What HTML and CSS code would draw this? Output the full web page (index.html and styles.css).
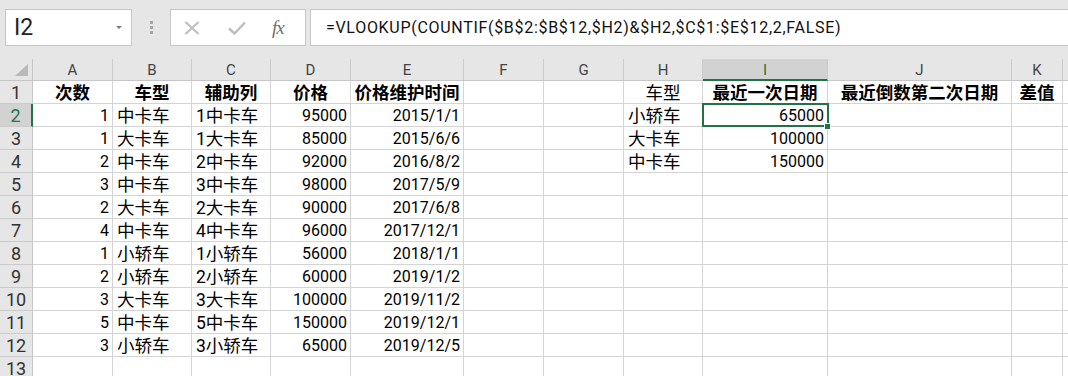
FILE: index.html
```html
<!DOCTYPE html>
<html lang="zh-CN">
<head>
<meta charset="utf-8">
<title>Sheet</title>
<link rel="stylesheet" href="styles.css">
</head>
<body>
<div class="bar">
  <div class="namebox"><span class="name">I2</span><span class="caret"></span></div>
  <div class="dots"><i></i><i></i><i></i></div>
  <div class="btns">
    <svg class="ico" width="16" height="14" viewBox="0 0 16 14"><path d="M1.5 1 L14.5 13 M14.5 1 L1.5 13" stroke="#bdbdbd" stroke-width="2" fill="none"/></svg>
    <svg class="ico" width="18" height="14" viewBox="0 0 18 14"><path d="M1 7.5 L6.5 12.5 L17 1.5" stroke="#bdbdbd" stroke-width="2.4" fill="none"/></svg>
    <span class="fx"><i>f</i><i>x</i></span>
  </div>
  <div class="formula">=VLOOKUP(COUNTIF($B$2:$B$12,$H2)&amp;$H2,$C$1:$E$12,2,FALSE)</div>
</div>

<div class="sheet">
  <div class="corner"><svg width="13" height="12" viewBox="0 0 13 12"><polygon points="13,0 13,12 0,12" fill="#b9b9b9"/></svg></div>
  <div class="ch">A</div><div class="ch">B</div><div class="ch">C</div><div class="ch">D</div><div class="ch">E</div><div class="ch">F</div><div class="ch">G</div><div class="ch">H</div><div class="ch act">I</div><div class="ch">J</div><div class="ch">K</div><div class="ch"></div>

  <div class="rh">1</div>
  <div class="c b">次数</div><div class="c b">车型</div><div class="c b">辅助列</div><div class="c b">价格</div><div class="c b">价格维护时间</div><div class="c"></div><div class="c"></div><div class="c ctr">车型</div><div class="c b">最近一次日期</div><div class="c b">最近倒数第二次日期</div><div class="c b">差值</div><div class="c"></div>

  <div class="rh act">2</div>
  <div class="c n">1</div><div class="c t">中卡车</div><div class="c t">1中卡车</div><div class="c n">95000</div><div class="c n">2015/1/1</div><div class="c"></div><div class="c"></div><div class="c t">小轿车</div><div class="c n sel">65000</div><div class="c"></div><div class="c"></div><div class="c"></div>

  <div class="rh">3</div>
  <div class="c n">1</div><div class="c t">大卡车</div><div class="c t">1大卡车</div><div class="c n">85000</div><div class="c n">2015/6/6</div><div class="c"></div><div class="c"></div><div class="c t">大卡车</div><div class="c n">100000</div><div class="c"></div><div class="c"></div><div class="c"></div>

  <div class="rh">4</div>
  <div class="c n">2</div><div class="c t">中卡车</div><div class="c t">2中卡车</div><div class="c n">92000</div><div class="c n">2016/8/2</div><div class="c"></div><div class="c"></div><div class="c t">中卡车</div><div class="c n">150000</div><div class="c"></div><div class="c"></div><div class="c"></div>

  <div class="rh">5</div>
  <div class="c n">3</div><div class="c t">中卡车</div><div class="c t">3中卡车</div><div class="c n">98000</div><div class="c n">2017/5/9</div><div class="c"></div><div class="c"></div><div class="c"></div><div class="c"></div><div class="c"></div><div class="c"></div><div class="c"></div>

  <div class="rh">6</div>
  <div class="c n">2</div><div class="c t">大卡车</div><div class="c t">2大卡车</div><div class="c n">90000</div><div class="c n">2017/6/8</div><div class="c"></div><div class="c"></div><div class="c"></div><div class="c"></div><div class="c"></div><div class="c"></div><div class="c"></div>

  <div class="rh">7</div>
  <div class="c n">4</div><div class="c t">中卡车</div><div class="c t">4中卡车</div><div class="c n">96000</div><div class="c n">2017/12/1</div><div class="c"></div><div class="c"></div><div class="c"></div><div class="c"></div><div class="c"></div><div class="c"></div><div class="c"></div>

  <div class="rh">8</div>
  <div class="c n">1</div><div class="c t">小轿车</div><div class="c t">1小轿车</div><div class="c n">56000</div><div class="c n">2018/1/1</div><div class="c"></div><div class="c"></div><div class="c"></div><div class="c"></div><div class="c"></div><div class="c"></div><div class="c"></div>

  <div class="rh">9</div>
  <div class="c n">2</div><div class="c t">小轿车</div><div class="c t">2小轿车</div><div class="c n">60000</div><div class="c n">2019/1/2</div><div class="c"></div><div class="c"></div><div class="c"></div><div class="c"></div><div class="c"></div><div class="c"></div><div class="c"></div>

  <div class="rh">10</div>
  <div class="c n">3</div><div class="c t">大卡车</div><div class="c t">3大卡车</div><div class="c n">100000</div><div class="c n">2019/11/2</div><div class="c"></div><div class="c"></div><div class="c"></div><div class="c"></div><div class="c"></div><div class="c"></div><div class="c"></div>

  <div class="rh">11</div>
  <div class="c n">5</div><div class="c t">中卡车</div><div class="c t">5中卡车</div><div class="c n">150000</div><div class="c n">2019/12/1</div><div class="c"></div><div class="c"></div><div class="c"></div><div class="c"></div><div class="c"></div><div class="c"></div><div class="c"></div>

  <div class="rh">12</div>
  <div class="c n">3</div><div class="c t">小轿车</div><div class="c t">3小轿车</div><div class="c n">65000</div><div class="c n">2019/12/5</div><div class="c"></div><div class="c"></div><div class="c"></div><div class="c"></div><div class="c"></div><div class="c"></div><div class="c"></div>

  <div class="rh">13</div>
  <div class="c"></div><div class="c"></div><div class="c"></div><div class="c"></div><div class="c"></div><div class="c"></div><div class="c"></div><div class="c"></div><div class="c"></div><div class="c"></div><div class="c"></div><div class="c"></div>
</div>
</body>
</html>
```

FILE: styles.css
```css
html, body {
  margin: 0;
  padding: 0;
}
body {
  width: 1068px;
  height: 376px;
  overflow: hidden;
  background: #ffffff;
  font-family: Roboto, "Noto Sans CJK SC", sans-serif;
  color: #000;
}

/* ---------- formula bar ---------- */
.bar {
  height: 59px;
  box-sizing: border-box;
  background: #e6e6e6;
  display: flex;
  align-items: flex-start;
  padding: 9px 0 0 5px;
}
.namebox {
  width: 127px;
  height: 37px;
  box-sizing: border-box;
  background: #fff;
  border: 1px solid #c6c6c6;
  display: flex;
  align-items: center;
  justify-content: space-between;
  padding: 0 9px 0 8px;
}
.name {
  font-size: 23px;
  color: #222;
  line-height: 1;
}
.caret {
  width: 0;
  height: 0;
  border-left: 3px solid transparent;
  border-right: 3px solid transparent;
  border-top: 3px solid #7a7a7a;
  margin-bottom: 1px;
}
.dots {
  width: 38px;
  height: 37px;
  display: flex;
  flex-direction: column;
  align-items: center;
  justify-content: center;
  gap: 2px;
}
.dots i {
  display: block;
  width: 3px;
  height: 3px;
  background: #a6a6a6;
}
.btns {
  width: 136px;
  height: 37px;
  box-sizing: border-box;
  background: #fff;
  border: 1px solid #c6c6c6;
  display: flex;
  align-items: center;
  padding-left: 13px;
  gap: 28px;
}
.ico {
  display: block;
}
.fx {
  font-family: "Liberation Serif", serif;
  font-size: 19px;
  color: #6e6e6e;
  line-height: 1;
  margin-left: -2px;
}
.fx i {
  font-style: italic;
}
.fx i + i {
  margin-left: -1px;
}
.formula {
  flex: 1;
  margin-left: 4px;
  height: 37px;
  box-sizing: border-box;
  background: #fff;
  border: 1px solid #c6c6c6;
  border-right: none;
  display: flex;
  align-items: center;
  padding-left: 15px;
  font-size: 16px;
  letter-spacing: 0.7px;
  color: #111;
  white-space: nowrap;
}

/* ---------- sheet grid ---------- */
.sheet {
  display: grid;
  grid-template-columns: 33px 80px 79px 79px 80px 113px 80px 80px 79px 125px 184px 51px 1fr;
  grid-template-rows: 22px repeat(13, 23px);
}
.corner,
.ch,
.rh,
.c {
  box-sizing: border-box;
  min-width: 0;
  overflow: hidden;
  white-space: nowrap;
}
.corner {
  background: #e6e6e6;
  border-right: 1px solid #c6c6c6;
  border-bottom: 1px solid #c6c6c6;
  display: flex;
  align-items: flex-end;
  justify-content: flex-end;
  padding: 0 4px 4px 0;
}
.corner svg {
  display: block;
}
.ch {
  background: #e6e6e6;
  border-right: 1px solid #cbcbcb;
  border-bottom: 1px solid #c6c6c6;
  display: flex;
  align-items: center;
  justify-content: center;
  font-size: 15px;
  color: #444;
  padding-top: 1px;
}
.ch.act {
  background: #d2d2d2;
  border-bottom: 2px solid #217346;
  color: #217346;
}
.rh {
  background: #e6e6e6;
  border-right: 1px solid #c6c6c6;
  border-bottom: 1px solid #cbcbcb;
  display: flex;
  align-items: center;
  justify-content: center;
  font-size: 18px;
  color: #333;
}
.rh.act {
  background: #d2d2d2;
  border-right: 2px solid #217346;
  color: #217346;
}
.c {
  border-right: 1px solid #d4d4d4;
  border-bottom: 1px solid #d4d4d4;
  display: flex;
  align-items: flex-end;
  line-height: 20px;
  padding: 0 3px 0 4px;
}
.t {
  font-size: 17.5px;
  justify-content: flex-start;
}
.ctr {
  font-size: 17.5px;
  justify-content: center;
  padding: 0;
}
.n {
  font-size: 16px;
  justify-content: flex-end;
}
.b {
  font-size: 17.5px;
  font-weight: 700;
  justify-content: center;
  padding: 0;
}
.sel {
  position: relative;
  overflow: visible;
}
.sel::after {
  content: "";
  position: absolute;
  left: -1px;
  top: -1px;
  right: -2px;
  bottom: -1px;
  border: 2px solid #217346;
}
.sel::before {
  content: "";
  position: absolute;
  right: -4px;
  bottom: -4px;
  width: 5px;
  height: 5px;
  background: #217346;
  border: 1px solid #fff;
  z-index: 2;
}
```
